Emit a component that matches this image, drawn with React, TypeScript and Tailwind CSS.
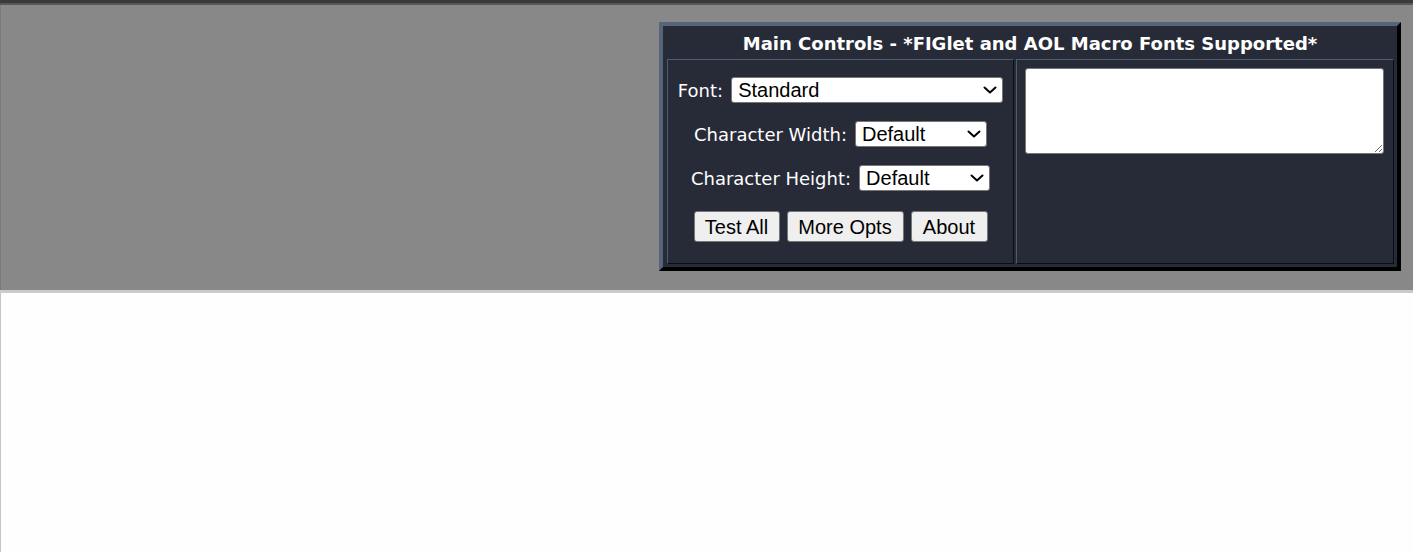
import React from "react";

const Chevron = () => (
  <svg
    className="pointer-events-none absolute right-[6px] top-1/2 -translate-y-1/2"
    width="14"
    height="8"
    viewBox="0 0 14 8"
    fill="none"
  >
    <path d="M1.5 1.5 L7 6.5 L12.5 1.5" stroke="#000" strokeWidth="2" strokeLinecap="round" strokeLinejoin="round" />
  </svg>
);

const Select = ({ width, value, options }: { width: string; value: string; options: string[] }) => (
  <div className={`relative h-[26px] ${width}`}>
    <select
      defaultValue={value}
      className="h-full w-full appearance-none rounded-[3px] border border-[#767676] bg-white pl-[6px] text-[20px] leading-[24px] text-black outline-none"
      style={{ fontFamily: '"Liberation Sans", Arial, sans-serif' }}
    >
      {options.map((o) => (
        <option key={o}>{o}</option>
      ))}
    </select>
    <Chevron />
  </div>
);

const Btn = ({ w, children }: { w: string; children: React.ReactNode }) => (
  <button
    className={`h-[31px] ${w} rounded-[3px] border border-[#767676] bg-[#efefef] text-[20px] leading-[24px] text-black`}
    style={{ fontFamily: '"Liberation Sans", Arial, sans-serif' }}
  >
    {children}
  </button>
);

export default function App() {
  const verdana = { fontFamily: '"DejaVu Sans", Verdana, sans-serif' };
  return (
    <div className="min-h-[552px] w-full bg-[#fefefe]">
      <div className="h-[3px] bg-[#3a3a3a]" />
      <div className="h-[2px] bg-[#575757]" />
      <div className="flex h-[285px] justify-end border-l border-[#7a7a7a] bg-[#888888] pr-[12px] pt-[17px]">
        <div
          className="flex h-[249px] w-[742px] flex-col border-4 border-b-black border-l-[#56657a] border-r-black border-t-[#56657a] bg-[#272b37]"
          style={verdana}
        >
          <div className="h-[33px] pt-[7px] text-center text-[18px] font-bold leading-[21px] text-white">
            Main Controls - *FIGlet and AOL Macro Fonts Supported*
          </div>
          <div className="flex h-[205px] gap-[2px] pl-[4px] pr-[3px]">
            <div className="flex w-[347px] flex-col items-center border border-b-[#0c0d12] border-l-[#4d5b6e] border-r-[#0c0d12] border-t-[#4d5b6e] pt-[17px] text-[18px] leading-[21px] text-white">
              <div className="flex items-center gap-[8px]">
                <span>Font:</span>
                <Select width="w-[272px]" value="Standard" options={["Standard", "Banner", "Big", "Block"]} />
              </div>
              <div className="mt-[18px] flex items-center gap-[8px]">
                <span>Character Width:</span>
                <Select width="w-[132px]" value="Default" options={["Default", "Full", "Fitted"]} />
              </div>
              <div className="mt-[18px] flex items-center gap-[8px]">
                <span>Character Height:</span>
                <Select width="w-[131px]" value="Default" options={["Default", "Full", "Fitted"]} />
              </div>
              <div className="mt-[20px] flex gap-[7px]">
                <Btn w="w-[86px]">Test All</Btn>
                <Btn w="w-[117px]">More Opts</Btn>
                <Btn w="w-[77px]">About</Btn>
              </div>
            </div>
            <div className="w-[378px] border border-b-[#0c0d12] border-l-[#4d5b6e] border-r-[#0c0d12] border-t-[#4d5b6e] pl-[8px] pt-[8px]">
              <textarea className="block h-[86px] w-[359px] rounded-[3px] border border-[#767676] bg-white outline-none" />
            </div>
          </div>
        </div>
      </div>
      <div className="h-[3px] bg-[#cbcbcb]" />
      <div className="h-[259px] border-l border-[#c4c4c4] bg-[#fefefe]" />
    </div>
  );
}
